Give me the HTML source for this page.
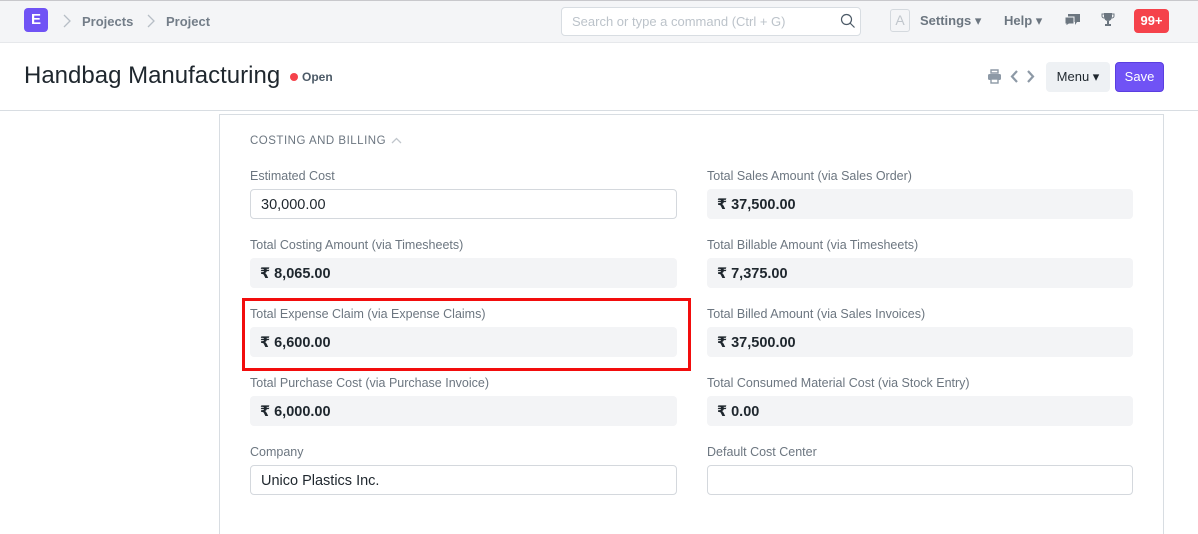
<!DOCTYPE html>
<html><head><meta charset="utf-8"><style>
*{box-sizing:border-box;margin:0;padding:0}
body{width:1198px;height:525px;overflow:hidden;background:#fff;font-family:"Liberation Sans","DejaVu Sans",sans-serif;position:relative;color:#1f272e}
.a{position:absolute}
.nav{left:0;top:0;width:1198px;height:43px;background:#f4f5f7;border-top:1px solid #c8c8cc;border-bottom:1px solid #e6e8eb}
.lbl{position:absolute;font-size:12.5px;color:#6c7680}
.box{position:absolute;width:427px;height:30px;border-radius:4px;background:#f3f4f6;font-size:14.5px;font-weight:bold;color:#1f272e;padding:8px 10px}
.inp{position:absolute;width:427px;height:30px;border-radius:4px;background:#fff;border:1px solid #d4d8dd;font-size:14.5px;color:#1f272e;padding:7px 10px}
</style></head><body>
<div class="a nav"></div>
<div class="a" style="left:24px;top:8px;width:24px;height:24px;background:#7053f5;border-radius:4px;color:#fff;font-weight:bold;font-size:15px;text-align:center;line-height:24px">E</div>
<svg class="a" style="left:62px;top:14px" width="10" height="14"><path d="M2 1l6 6-6 6" stroke="#b7bec6" stroke-width="1.3" fill="none"/></svg>
<div class="a" style="left:82px;top:14px;font-size:13px;font-weight:bold;color:#737d88">Projects</div>
<svg class="a" style="left:146px;top:14px" width="10" height="14"><path d="M2 1l6 6-6 6" stroke="#b7bec6" stroke-width="1.3" fill="none"/></svg>
<div class="a" style="left:166px;top:14px;font-size:13px;font-weight:bold;color:#737d88">Project</div>
<div class="a" style="left:561px;top:7px;width:300px;height:29px;border:1px solid #d8dde2;border-radius:4px;background:#fff;font-size:13px;color:#bcc3ca;padding:6px 10px">Search or type a command (Ctrl + G)</div>
<svg class="a" style="left:840px;top:13px" width="16" height="16"><circle cx="6.5" cy="6.5" r="5" stroke="#4c5a67" stroke-width="1.2" fill="none"/><path d="M10 10l4.5 4.5" stroke="#4c5a67" stroke-width="1.2"/></svg>
<div class="a" style="left:890px;top:9px;width:20px;height:23px;border:1px solid #d4d9de;border-radius:3px;color:#c0c6cc;font-size:14px;text-align:center;line-height:21px">A</div>
<div class="a" style="left:920px;top:13px;font-size:13px;font-weight:bold;color:#6c7680">Settings ▾</div>
<div class="a" style="left:1004px;top:13px;font-size:13px;font-weight:bold;color:#6c7680">Help ▾</div>
<svg class="a" style="left:1064px;top:13px" width="17" height="14"><path d="M4 1h12v8h-3l-2 3v-3H4z" fill="#6c7680"/><path d="M1 4h9v7H5l-3 2v-2H1z" fill="#6c7680" stroke="#f4f5f7"/></svg>
<svg class="a" style="left:1101px;top:12px" width="14" height="15"><path d="M3 1h8v4a4 4 0 0 1-8 0z" fill="#6c7680"/><path d="M3 2H1v2a2 2 0 0 0 2 2M11 2h2v2a2 2 0 0 1-2 2" stroke="#6c7680" fill="none"/><path d="M6 9h2v3h2v2H4v-2h2z" fill="#6c7680"/></svg>
<div class="a" style="left:1134px;top:9px;width:35px;height:24px;background:#f5424b;border-radius:4px;color:#fff;font-size:13px;font-weight:bold;text-align:center;line-height:24px">99+</div>

<div class="a" style="left:24px;top:62px;font-size:24px;color:#1f272e">Handbag Manufacturing</div>
<div class="a" style="left:290px;top:73px;width:8px;height:8px;border-radius:50%;background:#f5424b"></div>
<div class="a" style="left:302px;top:70px;font-size:12px;font-weight:bold;color:#4c5a67">Open</div>
<svg class="a" style="left:987px;top:69px" width="48" height="15"><path d="M4 1h7v3H4z" fill="none" stroke="#8d99a6" stroke-width="1.4"/><rect x="1" y="5" width="13" height="6" rx="1.5" fill="#8d99a6"/><rect x="4" y="10" width="7" height="4" fill="#fff" stroke="#8d99a6" stroke-width="1.4"/><path d="M30 2l-5 5.5 5 5.5" stroke="#8d99a6" stroke-width="2.2" fill="none"/><path d="M41 2l5 5.5-5 5.5" stroke="#8d99a6" stroke-width="2.2" fill="none"/></svg>
<div class="a" style="left:1046px;top:62px;width:64px;height:30px;background:#eef1f4;border-radius:4px;font-size:13px;color:#1f272e;text-align:center;line-height:30px">Menu ▾</div>
<div class="a" style="left:1115px;top:62px;width:49px;height:30px;background:#7053f5;border:1px solid #5a3ee0;border-radius:4px;font-size:13px;color:#fff;text-align:center;line-height:28px">Save</div>

<div class="a" style="left:0;top:110px;width:1198px;height:1px;background:#d8dde2"></div>
<div class="a" style="left:219px;top:114px;width:945px;height:420px;border:1px solid #d8dde2;border-bottom:none"></div>
<div class="a" style="left:250px;top:135px;font-size:11.5px;letter-spacing:.5px;color:#6c7680">COSTING AND BILLING</div>
<svg class="a" style="left:391px;top:137px" width="11" height="8"><path d="M1 6l4.5-4.5L10 6" stroke="#c0c6cc" stroke-width="1.3" fill="none"/></svg>

<div class="lbl" style="left:250px;top:169px">Estimated Cost</div>
<div class="inp" style="left:250px;top:189px">30,000.00</div>
<div class="lbl" style="left:707px;top:169px">Total Sales Amount (via Sales Order)</div>
<div class="box" style="left:707px;top:189px;width:426px">₹ 37,500.00</div>

<div class="lbl" style="left:250px;top:238px">Total Costing Amount (via Timesheets)</div>
<div class="box" style="left:250px;top:258px">₹ 8,065.00</div>
<div class="lbl" style="left:707px;top:238px">Total Billable Amount (via Timesheets)</div>
<div class="box" style="left:707px;top:258px;width:426px">₹ 7,375.00</div>

<div class="lbl" style="left:250px;top:307px">Total Expense Claim (via Expense Claims)</div>
<div class="box" style="left:250px;top:327px">₹ 6,600.00</div>
<div class="lbl" style="left:707px;top:307px">Total Billed Amount (via Sales Invoices)</div>
<div class="box" style="left:707px;top:327px;width:426px">₹ 37,500.00</div>
<div class="a" style="left:242px;top:298px;width:449px;height:73px;border:3px solid #f20d0d"></div>

<div class="lbl" style="left:250px;top:376px">Total Purchase Cost (via Purchase Invoice)</div>
<div class="box" style="left:250px;top:396px">₹ 6,000.00</div>
<div class="lbl" style="left:707px;top:376px">Total Consumed Material Cost (via Stock Entry)</div>
<div class="box" style="left:707px;top:396px;width:426px">₹ 0.00</div>

<div class="lbl" style="left:250px;top:445px">Company</div>
<div class="inp" style="left:250px;top:465px">Unico Plastics Inc.</div>
<div class="lbl" style="left:707px;top:445px">Default Cost Center</div>
<div class="inp" style="left:707px;top:465px;width:426px"></div>
</body></html>
